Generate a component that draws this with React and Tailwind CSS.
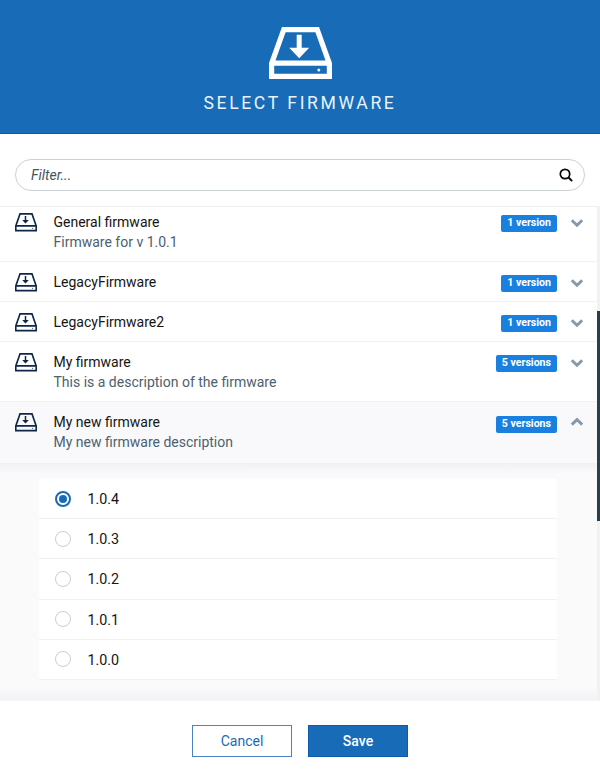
import React from "react";

const firmwares = [
  { name: "General firmware", description: "Firmware for v 1.0.1", label: "1 version" },
  { name: "LegacyFirmware", label: "1 version" },
  { name: "LegacyFirmware2", label: "1 version" },
  { name: "My firmware", description: "This is a description of the firmware", label: "5 versions" },
  { name: "My new firmware", description: "My new firmware description", label: "5 versions", open: true },
];

const versions = ["1.0.4", "1.0.3", "1.0.2", "1.0.1", "1.0.0"];

function DriveLarge() {
  return (
    <svg className="h-[52px] w-[63px]" viewBox="0 0 63 52" fill="none">
      <path
        d="M14.8 2.6H48.2L60.4 36.5V49.4H2.6V36.5Z M2.6 36.2H60.4"
        stroke="white"
        strokeWidth="5.2"
      />
      <path d="M27.7 7.7h5v13h7.5L30.2 31.2L20.2 20.7H27.7Z" fill="white" />
      <circle cx="49.8" cy="42.9" r="1.5" fill="white" />
    </svg>
  );
}

function DriveSmall() {
  return (
    <svg className="h-[19px] w-[22px] shrink-0 text-[#0f2747]" viewBox="0 0 22 19" fill="none" stroke="currentColor">
      <path d="M5 .9H17L21.2 13V17.6H.8V13Z M.8 12.9H21.2" strokeWidth="1.6" />
      <path d="M10.5 3V9" strokeWidth="1.5" />
      <path d="M7.2 7H13.8L10.5 10.6Z" fill="currentColor" stroke="none" />
      <circle cx="17.4" cy="15.3" r=".5" fill="currentColor" stroke="none" />
    </svg>
  );
}

function Chevron({ up }) {
  return (
    <svg className={up ? "h-[10px] w-[14px] -mt-[3px]" : "h-[10px] w-[14px] -mt-[1px]"} viewBox="0 0 14 10" fill="none">
      <path d={up ? "M1.8 7.6L7 2.6L12.2 7.6" : "M1.8 2.2L7 7.2L12.2 2.2"} stroke="#8798a8" strokeWidth="2.9" />
    </svg>
  );
}

function FirmwareRow({ item, first }) {
  const height = first
    ? "h-[55px]"
    : item.open
      ? "h-[62px] pt-[5px] bg-[#f9f9fc]"
      : item.description
        ? "h-[60px] pt-[5px]"
        : "h-[40px] pt-[5px]";
  return (
    <div className={`flex items-start border-b border-[#f0f1f2] pl-[15px] pr-[13px] ${height}`}>
      <div className="flex h-[30px] items-center">
        <DriveSmall />
      </div>
      <div className="ml-[16.5px] flex-1 pt-[5px] text-[14px] leading-[20px]">
        <div className="text-[#151515]">{item.name}</div>
        {item.description && <div className="text-[#4c616e]">{item.description}</div>}
      </div>
      <div className={`${item.open ? "mt-[9px]" : "mt-[8px]"} flex h-[17px] items-center rounded-[2px] bg-[#1a80e0] px-[6px] text-[10.6px] font-bold leading-none text-white`}>
        {item.label}
      </div>
      <div className="ml-[13px] flex h-[33px] items-center">
        <Chevron up={item.open} />
      </div>
    </div>
  );
}

export default function App() {
  return (
    <div className="flex h-[779px] w-[600px] flex-col overflow-hidden bg-white font-['Roboto',sans-serif]">
      <header className="flex h-[134px] shrink-0 flex-col items-center border-b border-[#0b5cae] bg-[#176bb7] pt-[27px]">
        <DriveLarge />
        <h1 className="mt-[12px] text-[17.6px] font-normal leading-[24px] tracking-[2.6px] text-[#eaf3fb]">SELECT FIRMWARE</h1>
      </header>

      <div className="h-[72px] shrink-0 px-[15px] pt-[25px]">
        <div className="flex h-[32px] items-center justify-between rounded-full border border-[#cbd2d6] pl-[15px] pr-[11px]">
          <span className="text-[14px] italic text-[#415563]">Filter...</span>
          <svg className="h-[14px] w-[14px]" viewBox="0 0 14 14" fill="none" stroke="#050505">
            <circle cx="6" cy="6" r="4.7" strokeWidth="1.7" />
            <path d="M9.3 9.3L13.1 13.1" strokeWidth="2" />
          </svg>
        </div>
      </div>

      <div className="flex h-[495px] shrink-0 border-t border-[#eeeff0]">
        <div className="w-[597px]">
          {firmwares.map((item, i) => (
            <FirmwareRow key={item.name} item={item} first={i === 0} />
          ))}
          <div className="h-[237px] border-b border-[#f6f6f8] bg-[linear-gradient(to_bottom,#f1f2f4_0,#fafafb_10px,#fafafb_222px,#f1f2f4_237px)] pl-[39px] pr-[40px] pt-[15px]">
            {versions.map((version, i) => (
              <label key={version} className="flex h-[40.2px] items-center border-b border-[#f0f1f2] bg-white pl-[16px]">
                {i === 0 ? (
                  <span className="flex h-[16px] w-[16px] items-center justify-center rounded-full border-2 border-[#176bb7]">
                    <span className="h-[8px] w-[8px] rounded-full bg-[#176bb7]" />
                  </span>
                ) : (
                  <span className="h-[16px] w-[16px] rounded-full border border-[#c8ced3]" />
                )}
                <span className="ml-[16.5px] pt-px text-[14.3px] leading-[20px] text-[#151515]">{version}</span>
              </label>
            ))}
          </div>
        </div>
        <div className="w-[3px] bg-[#f1f1f2] pt-[104px]">
          <div className="h-[210px] bg-[#2c3f49]" />
        </div>
      </div>

      <footer className="flex justify-center gap-[16px] pt-[24px] text-[14px]">
        <button className="h-[32px] w-[100px] border border-[#4c83c5] bg-white text-[#176bb7]">Cancel</button>
        <button className="h-[32px] w-[100px] border border-[#0b5cae] bg-[#176bb7] font-medium text-white">Save</button>
      </footer>
    </div>
  );
}
